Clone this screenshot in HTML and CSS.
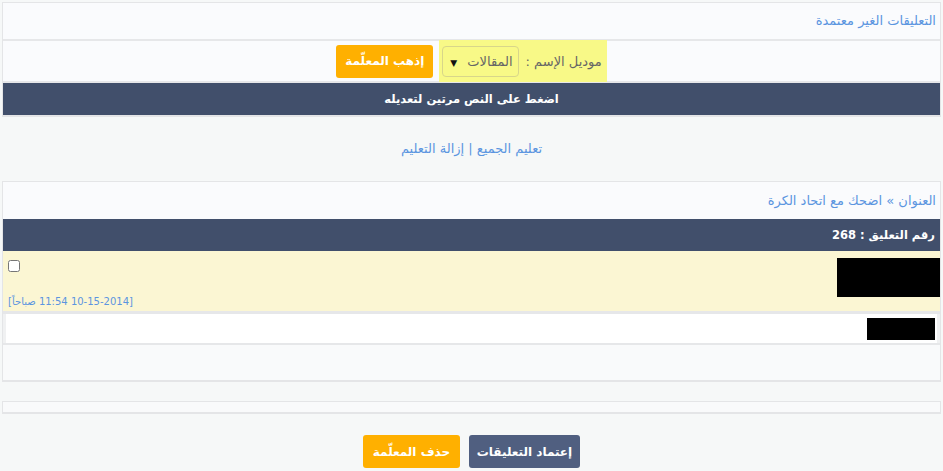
FILE: index.html
```html
<!DOCTYPE html>
<html lang="ar" dir="rtl">
<head>
  <meta charset="UTF-8" />
  <title>التعليقات الغير معتمدة</title>
  <link rel="stylesheet" href="styles.css">
</head>
<body>
  <div class="tborder">
    <div class="row head-row"><a href="#">التعليقات الغير معتمدة</a></div>
    <div class="row filter-row">
      <div class="module-box">
        <span>موديل الإسم :</span>
        <div class="select">المقالات <span class="arrow">▼</span></div>
      </div>
      <button class="btn btn-yellow">إذهب المعلّمة</button>
    </div>
    <div class="row dark-row center">اضغط على النص مرتين لتعديله</div>
  </div>

  <div class="links">
    <a href="#">تعليم الجميع</a> | <a href="#">إزالة التعليم</a>
  </div>

  <div class="tborder comments">
    <div class="row head-row"><a href="#">العنوان</a> » <a href="#">اضحك مع اتحاد الكرة</a></div>
    <div class="row dark-row">رقم التعليق : 268</div>
    <div class="row comment-row">
      <div class="redact big"></div>
      <div class="comment-side">
        <input type="checkbox" class="check">
        <span class="date">[10-15-2014 11:54 صباحاً]</span>
      </div>
    </div>
    <div class="row text-row">
      <div class="text-box"><div class="redact small"></div></div>
    </div>
    <div class="row empty-row"></div>
  </div>

  <div class="tborder thin"></div>

  <div class="actions">
    <button class="btn btn-blue">إعتماد التعليقات</button>
    <button class="btn btn-yellow">حذف المعلّمة</button>
  </div>
</body>
</html>
```

FILE: styles.css
```css
body {
  margin: 0;
  padding: 2px;
  direction: rtl;
  background: #f6f8f8;
  font-family: "DejaVu Sans", sans-serif;
  font-size: 13px;
  color: #555;
}
a {
  color: #5b95e0;
  text-decoration: none;
}
.tborder {
  border: 1px solid #e4e5e7;
  border-bottom-width: 2px;
  background: #e6e7e9;
}
.row {
  background: #fafbfd;
}
.head-row {
  height: 36px;
  line-height: 36px;
  padding: 0 4px;
  color: #5b95e0;
}
.filter-row {
  margin-top: 2px;
  height: 40px;
  display: flex;
  justify-content: center;
  align-items: center;
  gap: 6px;
}
.module-box {
  background: #f8f987;
  height: 42px;
  display: flex;
  align-items: center;
  gap: 7px;
  padding: 0 5px 0 3px;
  color: #666;
}
.select {
  border: 1px solid #d8d68a;
  border-radius: 4px;
  height: 29px;
  line-height: 29px;
  padding: 0 5px 0 7px;
  color: #666;
}
.arrow {
  color: #111;
  font-size: 9px;
  margin-right: 6px;
}
.btn {
  border: none;
  border-radius: 3px;
  color: #fff;
  font-family: "DejaVu Sans", sans-serif;
  font-size: 12px;
  font-weight: bold;
  height: 33px;
  cursor: pointer;
}
.btn-yellow {
  background: #ffb000;
  width: 97px;
}
.btn-blue {
  background: #505f80;
  width: 111px;
}
.dark-row {
  margin-top: 2px;
  background: #414f6b;
  color: #fff;
  font-size: 11.5px;
  font-weight: bold;
  height: 32px;
  line-height: 32px;
  padding: 0 5px;
}
.center {
  text-align: center;
}
.links {
  height: 64px;
  line-height: 64px;
  text-align: center;
  color: #5b95e0;
}
.comments {
  border-top-width: 1px;
}
.comments .head-row {
  height: 37px;
  line-height: 37px;
}
.comments .dark-row {
  margin-top: 0;
}
.comment-row {
  background: #fbf6d3;
  height: 60px;
  display: flex;
  justify-content: space-between;
}
.redact {
  background: #000;
}
.redact.big {
  width: 103px;
  height: 39px;
  margin-top: 7px;
}
.comment-side {
  display: flex;
  flex-direction: column;
  justify-content: space-between;
  align-items: flex-end;
  padding: 9px 0 4px 5px;
}
.check {
  margin: 0;
  width: 12px;
  height: 12px;
}
.date {
  font-size: 10px;
  color: #5b95e0;
}
.text-row {
  margin-top: 3px;
  padding: 0 3px;
  background: #f0f1f2;
}
.text-box {
  background: #fff;
  height: 29px;
  padding: 4px 2px 0 0;
  box-sizing: border-box;
}
.redact.small {
  width: 68px;
  height: 22px;
}
.empty-row {
  margin-top: 2px;
  height: 35px;
  background: #f9fafb;
}
.thin {
  margin-top: 19px;
  height: 10px;
  background: #f9fafb;
}
.actions {
  display: flex;
  justify-content: center;
  gap: 9px;
  margin-top: 21px;
}
```
